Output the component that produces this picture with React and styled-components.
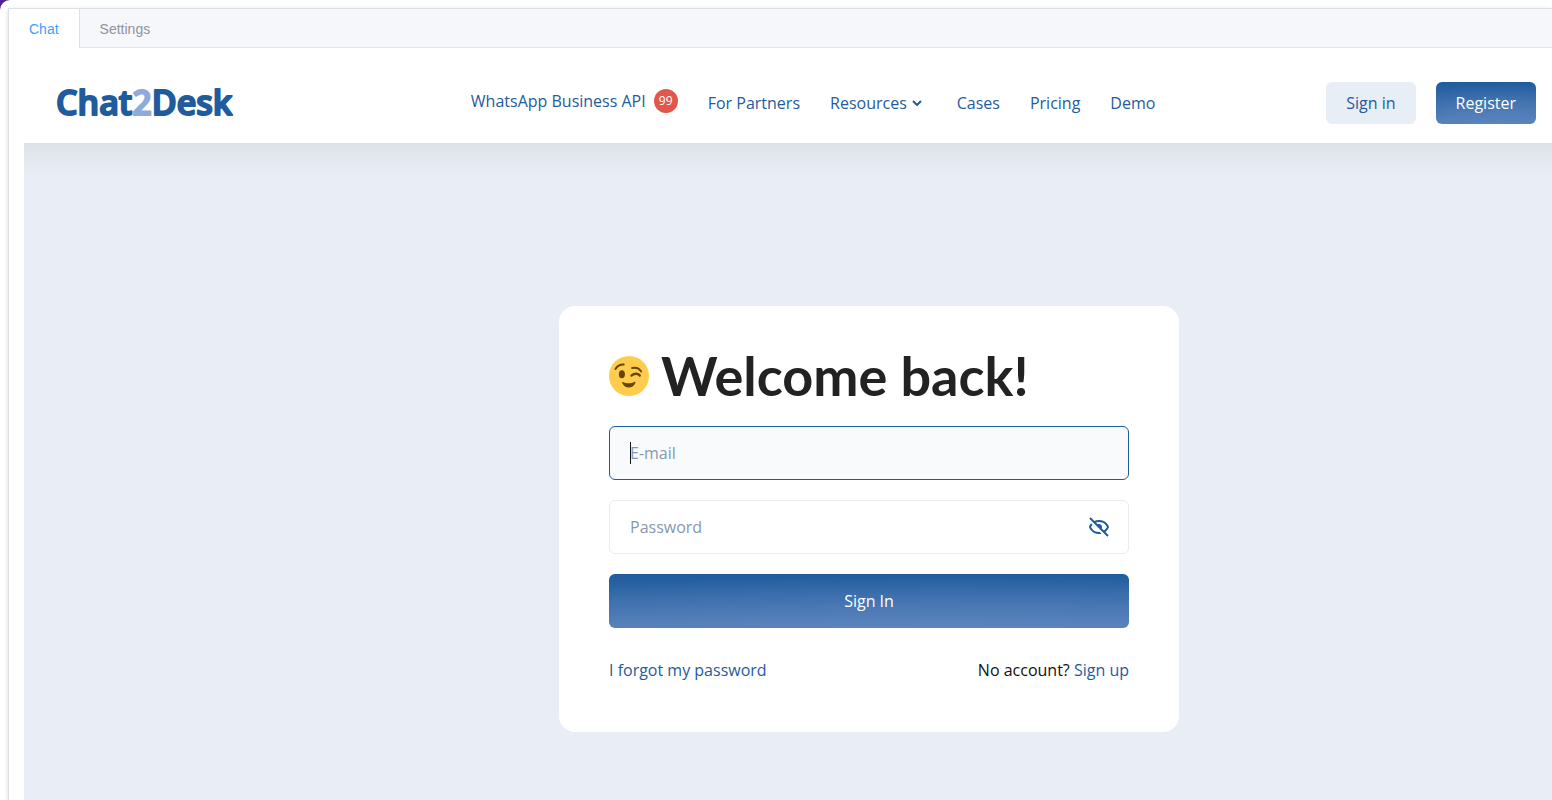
import React from "react";
import styled, { createGlobalStyle } from "styled-components";
import { BiHide } from "react-icons/bi";

const navItems = ["For Partners", "Resources", "Cases", "Pricing", "Demo"];

const Wordmark = () => (
    <WordmarkSvg width="176" height="56" viewBox="0 0 176 56" role="img" aria-label="Chat2Desk">
        <WordmarkText x="0" y="40">
            Chat<tspan>2</tspan>Desk
        </WordmarkText>
    </WordmarkSvg>
)

const Winking = () => (
    <svg width="40" height="40" viewBox="0 0 36 36" aria-hidden="true">
        <circle cx="18" cy="18" r="18" fill="#ffcc4d" />
        <path d="M5.800 11.600C7.500 8.800 10 7.500 13.300 7.600M20.800 10.800C24.500 10 27.300 11.200 29 14" fill="none" stroke="#664500" strokeWidth="1.700" strokeLinecap="round" />
        <ellipse cx="11.600" cy="16.500" rx="2.700" ry="3.600" fill="#664500" />
        <path d="M20.300 17.600C22 15.500 26 15.200 27.700 17.600" fill="none" stroke="#664500" strokeWidth="2.200" strokeLinecap="round" />
        <path d="M12.400 23.400C15.500 25 19.800 25 23.100 23.200C23.800 22.900 24 23.600 23.700 24.300C21.400 29.800 14.300 29.800 11.900 24.300C11.600 23.500 11.900 23.200 12.400 23.400Z" fill="#664500" />
    </svg>
)

export default function App(){
    return (
        <>
            <GlobalStyle />
            <Panel>
                <Workspace>
                    <Tabs>
                        <Tab active>Chat</Tab>
                        <Tab>Settings</Tab>
                    </Tabs>
                    <Content>
                        <Header>
                            <Logo href="#"><Wordmark /></Logo>
                            <Nav>
                                <ApiLink href="#">WhatsApp Business API <Badge>99</Badge></ApiLink>
                                {navItems.map(item => (
                                    <NavLink key={item} href="#" hasMenu={item === "Resources"}>
                                        {item}
                                        {item === "Resources" && (
                                            <svg width="10" height="6" viewBox="0 0 10 6" aria-hidden="true">
                                                <path d="M1 1L5 5L9 1" fill="none" stroke="#1f5b9d" strokeWidth="2" />
                                            </svg>
                                        )}
                                    </NavLink>
                                ))}
                            </Nav>
                            <Actions>
                                <HeaderButton>Sign in</HeaderButton>
                                <HeaderButton primary>Register</HeaderButton>
                            </Actions>
                        </Header>
                        <Main>
                            <Card>
                                <Title><Winking />Welcome back!</Title>
                                <Field type="email" placeholder="E-mail" aria-label="E-mail" autoFocus />
                                <PasswordRow>
                                    <Field type="password" placeholder="Password" aria-label="Password" />
                                    <EyeButton type="button" aria-label="Show password"><BiHide size={24} /></EyeButton>
                                </PasswordRow>
                                <Submit>Sign In</Submit>
                                <Footer>
                                    <a href="#">I forgot my password</a>
                                    <span>No account? <a href="#">Sign up</a></span>
                                </Footer>
                            </Card>
                        </Main>
                    </Content>
                </Workspace>
            </Panel>
        </>
    )
}

const GlobalStyle = createGlobalStyle`
    * {
        box-sizing: border-box;
    }
    body {
        margin: 0;
        background: #4d2596;
        font-family: "Open Sans", sans-serif;
        font-size: 16px;
        overflow-x: hidden;
    }
    a {
        color: #1f5b9d;
        text-decoration: none;
    }
    button, input {
        font: inherit;
    }
`
const Panel = styled.div`
    display: flex;
    min-height: 100vh;
    padding: 8px 0 0 8px;
    background: #fff;
    border-radius: 10px 0 0 0;
`
const Workspace = styled.div`
    flex: 1;
    display: flex;
    flex-direction: column;
    border: 1px solid #dcdfe6;
    border-width: 1px 0 0 1px;
    box-shadow: 0 2px 4px rgba(0, 0, 0, .12), 0 0 6px rgba(0, 0, 0, .04);
`
const Tabs = styled.div`
    display: flex;
    height: 39px;
    background: #f5f7fa;
    border-bottom: 1px solid #e4e7ed;
`
const Tab = styled.button.withConfig({ shouldForwardProp: prop => prop !== "active" })`
    height: 39px;
    padding: 0 20px;
    border: 0;
    border-right: 1px solid ${props => props.active ? "#dcdfe6" : "transparent"};
    background: ${props => props.active ? "#fff" : "transparent"};
    color: ${props => props.active ? "#409eff" : "#909399"};
    font-family: "Liberation Sans", sans-serif;
    font-size: 14px;
`
const Content = styled.div`
    flex: 1;
    display: flex;
    flex-direction: column;
    padding: 15px 0 0 15px;
    background: #fff;
`
const Header = styled.header`
    display: flex;
    align-items: center;
    justify-content: space-between;
    height: 80px;
    padding: 0 16px 0 32px;
`
const Logo = styled.a`
    display: flex;
    padding-right: 68px;
`
const WordmarkSvg = styled.svg`
    overflow: visible;
`
const WordmarkText = styled.text`
    fill: #1f5b9d;
    stroke: #1f5b9d;
    stroke-width: 2px;
    stroke-linejoin: round;
    font-family: "Open Sans", sans-serif;
    font-size: 34px;
    font-weight: 600;
    tspan {
        fill: #8eabdc;
        stroke: #8eabdc;
    }
`
const Nav = styled.nav`
    display: flex;
    align-items: center;
    gap: 30px;
`
const NavLink = styled.a.withConfig({ shouldForwardProp: prop => prop !== "hasMenu" })`
    display: flex;
    align-items: center;
    gap: 5px;
    padding-right: ${props => props.hasMenu ? "5px" : "0"};
    line-height: 24px;
`
const ApiLink = styled.a`
    display: flex;
    align-items: center;
    gap: 8px;
    padding-bottom: 4px;
    line-height: 24px;
`
const Badge = styled.span`
    width: 24px;
    height: 24px;
    border-radius: 50%;
    background: #e2574c;
    color: #fff;
    font-size: 12px;
    text-align: center;
`
const Actions = styled.div`
    display: flex;
    gap: 20px;
`
const gradient = "radial-gradient(100% 100% at 65% 100%, rgba(99, 137, 193, .5) 0%, rgba(99, 137, 193, 0) 100%), linear-gradient(#1f5b9d, #5580ba)";

const HeaderButton = styled.button.withConfig({ shouldForwardProp: prop => prop !== "primary" })`
    height: 42px;
    padding: 0 20px;
    border: 0;
    border-radius: 6px;
    background: ${props => props.primary ? gradient : "#e8eef6"};
    color: ${props => props.primary ? "#fff" : "#1f5b9d"};
    font-weight: ${props => props.primary ? 500 : 400};
`
const Main = styled.main`
    flex: 1;
    padding: 163px 0 68px 162px;
    background: linear-gradient(#dde2e9, #e9eef6 32px);
`
const Card = styled.form`
    max-width: 620px;
    margin: 0 auto;
    padding: 40px 50px;
    border-radius: 16px;
    background: #fff;
`
const Title = styled.h1`
    display: flex;
    align-items: center;
    gap: 12px;
    margin: 0 0 20px;
    color: #222;
    font-family: Lato, sans-serif;
    font-size: 54px;
    font-weight: 700;
    line-height: 60px;
    white-space: nowrap;
`
const Field = styled.input`
    display: block;
    width: 100%;
    height: 54px;
    padding: 0 20px;
    border: 1px solid #e8ebf0;
    border-radius: 6px;
    outline: none;
    background: #fff;
    color: #222;
    &:focus {
        border-color: #1f5b9d;
        background: #f8fafc;
    }
    &:focus:placeholder-shown {
        background: linear-gradient(#111, #111) 20px center / 1px 22px no-repeat #f8fafc;
        caret-color: transparent;
    }
    &::placeholder {
        color: #8798ad;
    }
`
const PasswordRow = styled.div`
    position: relative;
    margin: 20px 0;
`
const EyeButton = styled.button`
    position: absolute;
    top: 15px;
    right: 18px;
    display: flex;
    padding: 0;
    border: 0;
    background: none;
    color: #1f5b9d;
`
const Submit = styled.button`
    width: 100%;
    height: 54px;
    border: 0;
    border-radius: 6px;
    background: ${gradient};
    color: #fff;
    font-weight: 500;
`
const Footer = styled.div`
    display: flex;
    justify-content: space-between;
    margin: 30px 0 10px;
    color: #111;
    line-height: 24px;
`
